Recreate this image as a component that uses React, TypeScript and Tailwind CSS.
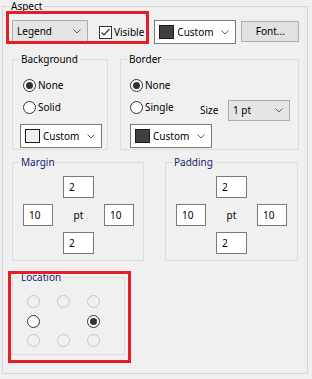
import React from "react";

function Chevron() {
  return (
    <svg width="8" height="5" viewBox="0 0 8 5" className="shrink-0">
      <path d="M0.5 0.5 L4 4 L7.5 0.5" stroke="#5f5f5f" strokeWidth="1" fill="none" />
    </svg>
  );
}

function Radio({ checked, disabled }: { checked?: boolean; disabled?: boolean }) {
  return (
    <span
      className={
        disabled
          ? "w-[13px] h-[13px] rounded-full border border-[#c6c6c6] shrink-0 flex items-center justify-center"
          : "w-[13px] h-[13px] rounded-full border border-[#333333] bg-white shrink-0 flex items-center justify-center"
      }
    >
      {checked && <span className="w-[7px] h-[7px] rounded-full bg-[#333333]" />}
    </span>
  );
}

function ColorCombo({ dark, className }: { dark?: boolean; className: string }) {
  return (
    <div className={`flex items-center bg-white border border-[#7a7a7a] pl-[4px] pr-[6px] ${className}`}>
      <span
        className={
          dark
            ? "w-[15px] h-[14px] border border-[#1a1a1a] bg-[#404040] shrink-0"
            : "w-[15px] h-[14px] border border-[#1a1a1a] bg-[#f0f0f0] shrink-0"
        }
      />
      <span className="ml-[3px] flex-1">Custom</span>
      <Chevron />
    </div>
  );
}

function NumBox({ value }: { value: string }) {
  return (
    <div className="h-[22px] bg-white border border-[#7a7a7a] pl-[5px] flex items-center">{value}</div>
  );
}

function Spacing({ label, className }: { label: string; className: string }) {
  return (
    <fieldset className={`border border-[#dcdcdc] pb-[6px] ${className}`}>
      <legend className="ml-[6px] px-[2px] leading-[13px] text-[#14206e]">{label}</legend>
      <div className="mt-[7px] ml-[10px] grid grid-cols-[30px_31px_30px] grid-rows-[22px_22px_22px] gap-x-[10px] gap-y-[6px]">
        <div />
        <NumBox value="2" />
        <div />
        <NumBox value="10" />
        <div className="flex items-center justify-center">pt</div>
        <NumBox value="10" />
        <div />
        <NumBox value="2" />
        <div />
      </div>
    </fieldset>
  );
}

export default function App() {
  return (
    <div className="w-[312px] h-[379px] bg-[#f0f0f0] relative overflow-hidden font-['Noto_Sans',sans-serif] text-[10px] text-black">
      <fieldset className="ml-[2px] w-[306px] border border-[#d6d6d6] pb-[18px]">
        <legend className="ml-[6px] px-[2px] leading-[13px]">Aspect</legend>

        <div className="pl-[9px]">
          {/* top row */}
          <div className="mt-[7px] h-[24px] flex items-start">
            <div className="w-[76px] h-[22px] bg-[#e5e5e5] border border-[#adadad] pl-[4px] pr-[6px] flex items-center">
              <span className="flex-1">Legend</span>
              <Chevron />
            </div>
            <div className="ml-[11px] mt-[5px] flex items-center">
              <span className="w-[13px] h-[13px] border border-[#333333] bg-white flex items-center justify-center">
                <svg width="11" height="11" viewBox="0 0 11 11">
                  <path d="M1.5 5.5 L4 8 L9.5 2" stroke="#333333" strokeWidth="1.2" fill="none" />
                </svg>
              </span>
              <span className="ml-[2px]">Visible</span>
            </div>
            <ColorCombo dark className="ml-[10px] w-[82px] h-[24px]" />
            <div className="ml-[5px] mt-[1px] w-[58px] h-[21px] bg-[#e1e1e1] border border-[#adadad] flex items-center justify-center">
              Font...
            </div>
          </div>

          {/* background / border */}
          <div className="mt-[9px] flex items-start">
            <fieldset className="w-[96px] border border-[#dcdcdc] pb-[1px]">
              <legend className="ml-[6px] px-[2px] leading-[13px]">Background</legend>
              <div className="pl-[7px]">
                <div className="mt-[13px] pl-[3px] flex flex-col gap-[9px]">
                  <div className="h-[13px] flex items-center gap-[2px]">
                    <Radio checked />
                    <span>None</span>
                  </div>
                  <div className="h-[13px] flex items-center gap-[2px]">
                    <Radio />
                    <span>Solid</span>
                  </div>
                </div>
                <ColorCombo className="mt-[10px] w-[82px] h-[24px]" />
              </div>
            </fieldset>

            <fieldset className="ml-[12px] w-[179px] border border-[#dcdcdc] pb-[1px]">
              <legend className="ml-[6px] px-[2px] leading-[13px]">Border</legend>
              <div className="pl-[9px]">
                <div className="mt-[13px] h-[13px] flex items-center gap-[2px]">
                  <Radio checked />
                  <span>None</span>
                </div>
                <div className="mt-[8px] h-[21px] flex items-start">
                  <div className="mt-[1px] w-[70px] h-[13px] flex items-center gap-[2px]">
                    <Radio />
                    <span>Single</span>
                  </div>
                  <span className="mt-[4px] w-[28px] leading-[13px]">Size</span>
                  <div className="w-[62px] h-[21px] bg-[#e5e5e5] border border-[#adadad] pl-[4px] pr-[6px] flex items-center">
                    <span className="flex-1">1 pt</span>
                    <Chevron />
                  </div>
                </div>
                <ColorCombo dark className="mt-[3px] w-[82px] h-[24px]" />
              </div>
            </fieldset>
          </div>

          {/* margin / padding */}
          <div className="mt-[6px] flex items-start">
            <Spacing label="Margin" className="w-[132px]" />
            <Spacing label="Padding" className="ml-[21px] w-[133px]" />
          </div>

          {/* location */}
          <fieldset className="mt-[10px] w-[113px] border border-[#dcdcdc] pb-[7px]">
            <legend className="ml-[6px] px-[2px] leading-[13px] text-[#14206e]">Location</legend>
            <div className="mt-[11px] ml-[14px] grid grid-cols-[13px_13px_13px] gap-x-[17px] gap-y-[6.5px]">
              <Radio disabled />
              <Radio disabled />
              <Radio disabled />
              <Radio />
              <span />
              <Radio checked />
              <Radio disabled />
              <Radio disabled />
              <Radio disabled />
            </div>
          </fieldset>
        </div>
      </fieldset>

      {/* annotation highlights */}
      <div className="absolute left-[6px] top-[11px] w-[143px] h-[33px] border-[3px] border-[#e81c24] pointer-events-none" />
      <div className="absolute left-[8px] top-[271px] w-[123px] h-[92px] border-[3px] border-[#e81c24] pointer-events-none" />
    </div>
  );
}
